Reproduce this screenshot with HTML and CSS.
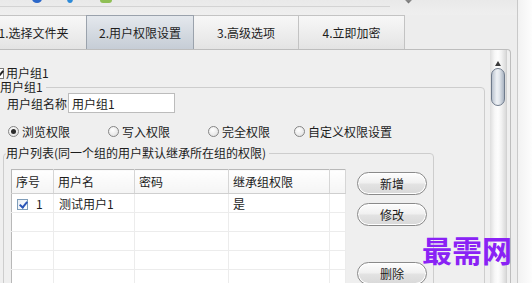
FILE: index.html
```html
<!DOCTYPE html>
<html>
<head>
<meta charset="utf-8">
<link rel="stylesheet" href="styles.css">
</head>
<body>
<div class="page">
  <div class="window">
    <div class="topbar">
      <span class="ico ico-blue1"></span>
      <span class="ico ico-blue2"></span>
      <span class="ico ico-green"></span>
      <span class="ico diamond"></span>
    </div>
    <div class="tabs">
      <div class="tab tab1">1.选择文件夹</div>
      <div class="tab tab2 active">2.用户权限设置</div>
      <div class="tab tab3">3.高级选项</div>
      <div class="tab tab4">4.立即加密</div>
    </div>
    <div class="frame">
      <div class="content">
        <div class="chkrow"><span class="chk checked"></span><span>用户组1</span></div>
        <fieldset class="group outer">
          <legend>用户组1</legend>
          <div class="namerow">
            <span class="label">用户组名称</span>
            <input class="textbox" type="text" value="用户组1">
          </div>
          <div class="radios">
            <label class="radio"><span class="dot on"></span>浏览权限</label>
            <label class="radio"><span class="dot"></span>写入权限</label>
            <label class="radio"><span class="dot"></span>完全权限</label>
            <label class="radio"><span class="dot"></span>自定义权限设置</label>
          </div>
          <fieldset class="group inner">
            <legend>用户列表(同一个组的用户默认继承所在组的权限)</legend>
            <div class="listbody">
              <table class="grid">
                <colgroup>
                  <col class="c1"><col class="c2"><col class="c3"><col class="c4"><col class="c5">
                </colgroup>
                <thead>
                  <tr><th>序号</th><th>用户名</th><th>密码</th><th>继承组权限</th><th></th></tr>
                </thead>
                <tbody>
                  <tr><td class="num"><span class="cb"></span>1</td><td class="user">测试用户1</td><td></td><td class="yes">是</td><td></td></tr>
                  <tr><td></td><td></td><td></td><td></td><td></td></tr>
                  <tr><td></td><td></td><td></td><td></td><td></td></tr>
                  <tr><td></td><td></td><td></td><td></td><td></td></tr>
                  <tr><td></td><td></td><td></td><td></td><td></td></tr>
                </tbody>
              </table>
              <div class="btns">
                <button class="btn">新增</button>
                <button class="btn mid">修改</button>
                <button class="btn del">删除</button>
              </div>
            </div>
          </fieldset>
        </fieldset>
      </div>
      <div class="scroll">
        <div class="arrow"></div>
        <div class="thumb"></div>
      </div>
    </div>
  </div>
  <div class="edge"></div>
  <div class="mark">最需网</div>
</div>
</body>
</html>
```

FILE: styles.css
```css
html, body {
  margin: 0;
  padding: 0;
}
body {
  width: 532px;
  height: 283px;
  overflow: hidden;
  background: #fafafa;
  font-family: "Noto Sans CJK SC", "Noto Sans", sans-serif;
  font-size: 12px;
  color: #1c1c1c;
}
.page {
  position: relative;
  display: flex;
  height: 283px;
}
.window {
  width: 518px;
  box-sizing: border-box;
  border-right: 1px solid #c9c9c9;
  background: #ededed;
  display: flex;
  flex-direction: column;
  overflow: hidden;
}
.edge {
  flex: 1;
  background: linear-gradient(90deg, #f2f2f2, #fdfdfd);
}

/* top strip */
.topbar {
  height: 15px;
  flex: none;
  display: flex;
  align-items: flex-start;
  background: linear-gradient(#d3d3d3, #d3d3d3) 0 6px / 390px 1px no-repeat, linear-gradient(#e9e9e9, #efefef);
}
.ico {
  display: block;
  margin-top: -6px;
  height: 9px;
}
.ico-blue1 {
  margin-left: 32px;
  width: 10px;
  border-radius: 50%;
  background: #2b67c9;
}
.ico-blue2 {
  margin-left: 25px;
  width: 6px;
  border-radius: 50%;
  background: #2d8ad8;
}
.ico-green {
  margin-left: 27px;
  width: 12px;
  border-radius: 3px;
  background: #8fbf55;
}
.diamond {
  margin-left: 293px;
  margin-top: -5px;
  width: 7px;
  height: 7px;
  transform: rotate(45deg);
  background: linear-gradient(135deg, #bdbdbd, #6f6f6f);
}

/* tabs */
.tabs {
  display: flex;
  height: 34px;
  flex: none;
  margin-left: -20px;
}
.tab {
  box-sizing: border-box;
  height: 34px;
  display: flex;
  align-items: center;
  justify-content: center;
  border: 1px solid #c3c3c3;
  border-bottom: none;
  background: linear-gradient(#f7f7f7, #ececec 60%, #e3e3e3);
  margin-right: -1px;
  font-size: 12px;
  color: #1e1e1e;
}
.tab1 { width: 107px; }
.tab2 { width: 108px; }
.tab3 { width: 106px; }
.tab4 { width: 107px; }
.tab.active {
  position: relative;
  border-color: #9aa2ac;
  background: linear-gradient(#e4e8ed, #d3d9e0 55%, #c6cdd6);
}

/* frame with content and scrollbar */
.frame {
  flex: 1;
  min-height: 0;
  display: flex;
  border-top: 1px solid #bdbdbd;
  border-right: 1px solid #bdbdbd;
  border-top-right-radius: 4px;
  margin-right: 6px;
  padding-right: 3px;
  background: #efefef;
  overflow: hidden;
}
.content {
  flex: 1;
  min-width: 0;
  padding-top: 16px;
  overflow: hidden;
}
.chkrow {
  display: flex;
  align-items: center;
  gap: 2px;
  height: 14px;
  line-height: 14px;
  margin-left: -7px;
}
.chk {
  width: 11px;
  height: 11px;
  box-sizing: border-box;
  border: 1px solid #7a7a7a;
  background: #fff;
  position: relative;
}
.chk.checked::after {
  content: "";
  position: absolute;
  left: 3px;
  top: 0px;
  width: 3px;
  height: 6px;
  border: solid #222;
  border-width: 0 2px 2px 0;
  transform: rotate(40deg);
}

/* group boxes */
.group {
  border: 1px solid #cdcdcd;
  border-radius: 4px;
  padding: 0;
  min-width: 0;
  box-sizing: border-box;
}
.group legend {
  padding: 0 3px 0 0;
  line-height: 12px;
  font-size: 12px;
}
.outer {
  margin: 1px 0 0 -4px;
  width: 489px;
}
.outer > legend {
  margin-left: 3px;
}
.namerow {
  display: flex;
  align-items: center;
  height: 20px;
  padding-left: 10px;
}
.label {
  width: 60px;
  white-space: nowrap;
}
.textbox {
  margin: 0 0 0 1px;
  width: 107px;
  height: 20px;
  box-sizing: border-box;
  border: 1px solid #bcbcbc;
  background: #fff;
  padding: 0 0 0 3px;
  font-family: "Noto Sans CJK SC", sans-serif;
  font-size: 12px;
  color: #1c1c1c;
  outline: none;
}
.radios {
  display: grid;
  grid-template-columns: 100px 100px 86px auto;
  margin-top: 10px;
  padding-left: 11px;
  height: 16px;
  align-items: center;
}
.radio {
  display: flex;
  align-items: center;
  gap: 3px;
  white-space: nowrap;
}
.dot {
  width: 11px;
  height: 11px;
  box-sizing: border-box;
  border: 1px solid #858585;
  border-radius: 50%;
  background: radial-gradient(circle at 40% 35%, #ffffff, #dcdcdc);
  display: flex;
  align-items: center;
  justify-content: center;
}
.dot.on::after {
  content: "";
  width: 5px;
  height: 5px;
  border-radius: 50%;
  background: #2b2b2b;
}
.inner {
  margin: 8px 0 0 6px;
  width: 431px;
}
.inner > legend {
  margin-left: 2px;
}
.listbody {
  display: flex;
  align-items: flex-start;
  gap: 11px;
  padding: 10px 0 0 7px;
}

/* table */
.grid {
  width: 334px;
  border-collapse: collapse;
  table-layout: fixed;
  background: #fff;
  border-left: 1px solid #b8b8b8;
  border-top: 1px solid #b8b8b8;
}
.c1 { width: 42px; }
.c2 { width: 81px; }
.c3 { width: 94px; }
.c4 { width: 101px; }
.c5 { width: 16px; }
.grid th {
  height: 23px;
  padding: 0 0 0 4px;
  text-align: left;
  font-weight: normal;
  background: linear-gradient(#ffffff, #f4f4f4);
  border-right: 1px solid #d6d6d6;
  border-bottom: 1px solid #cfcfcf;
  white-space: nowrap;
  overflow: hidden;
}
.grid td {
  height: 18px;
  padding: 0;
  border-right: 1px solid #ececec;
  border-bottom: 1px solid #ececec;
  white-space: nowrap;
}
.grid td.num {
  padding-left: 5px;
}
.cb {
  display: inline-block;
  vertical-align: -1px;
  width: 11px;
  height: 11px;
  box-sizing: border-box;
  border: 1px solid #7f9db9;
  background: linear-gradient(135deg, #e8eef5, #ffffff);
  position: relative;
  margin-right: 8px;
}
.cb::after {
  content: "";
  position: absolute;
  left: 3px;
  top: 0px;
  width: 3px;
  height: 6px;
  border: solid #2a55b8;
  border-width: 0 2px 2px 0;
  transform: rotate(40deg);
}
.grid td.user {
  padding-left: 5px;
}
.grid td.yes {
  padding-left: 4px;
}

/* buttons */
.btns {
  display: flex;
  flex-direction: column;
  padding-top: 3px;
}
.btn {
  width: 70px;
  height: 23px;
  margin: 0;
  padding: 0;
  border: 1px solid #8a8a8a;
  border-radius: 12px;
  background: linear-gradient(#fdfdfd, #f1f1f1 45%, #e2e2e2 55%, #d9d9d9);
  font-family: "Noto Sans CJK SC", sans-serif;
  font-size: 12px;
  color: #1c1c1c;
  box-shadow: inset 0 0 0 1px #ffffff;
}
.btn.mid {
  margin-top: 8px;
}
.btn.del {
  margin-top: 36px;
}

/* scrollbar */
.scroll {
  width: 17px;
  flex: none;
  box-sizing: border-box;
  border-right: 1px solid #d2d2d2;
  background: linear-gradient(90deg, #dedede, #f7f7f7 30%, #fdfdfd 50%, #f3f3f3 70%, #d9d9d9);
  display: flex;
  flex-direction: column;
  align-items: center;
}
.arrow {
  margin-top: 11px;
  width: 0;
  height: 0;
  border-left: 3px solid transparent;
  border-right: 3px solid transparent;
  border-bottom: 5px solid #3a3a3a;
}
.thumb {
  margin-top: 2px;
  width: 14px;
  height: 38px;
  box-sizing: border-box;
  border: 1px solid #6f7b8c;
  border-radius: 7px;
  background: linear-gradient(90deg, #b9c2ce, #eef1f5 40%, #e3e8ee 60%, #a9b3c1);
}

/* watermark */
.mark {
  position: absolute;
  left: 422px;
  top: 234px;
  font-size: 30px;
  line-height: 30px;
  font-weight: bold;
  color: #8a22f5;
  letter-spacing: 0;
  white-space: nowrap;
}
```
